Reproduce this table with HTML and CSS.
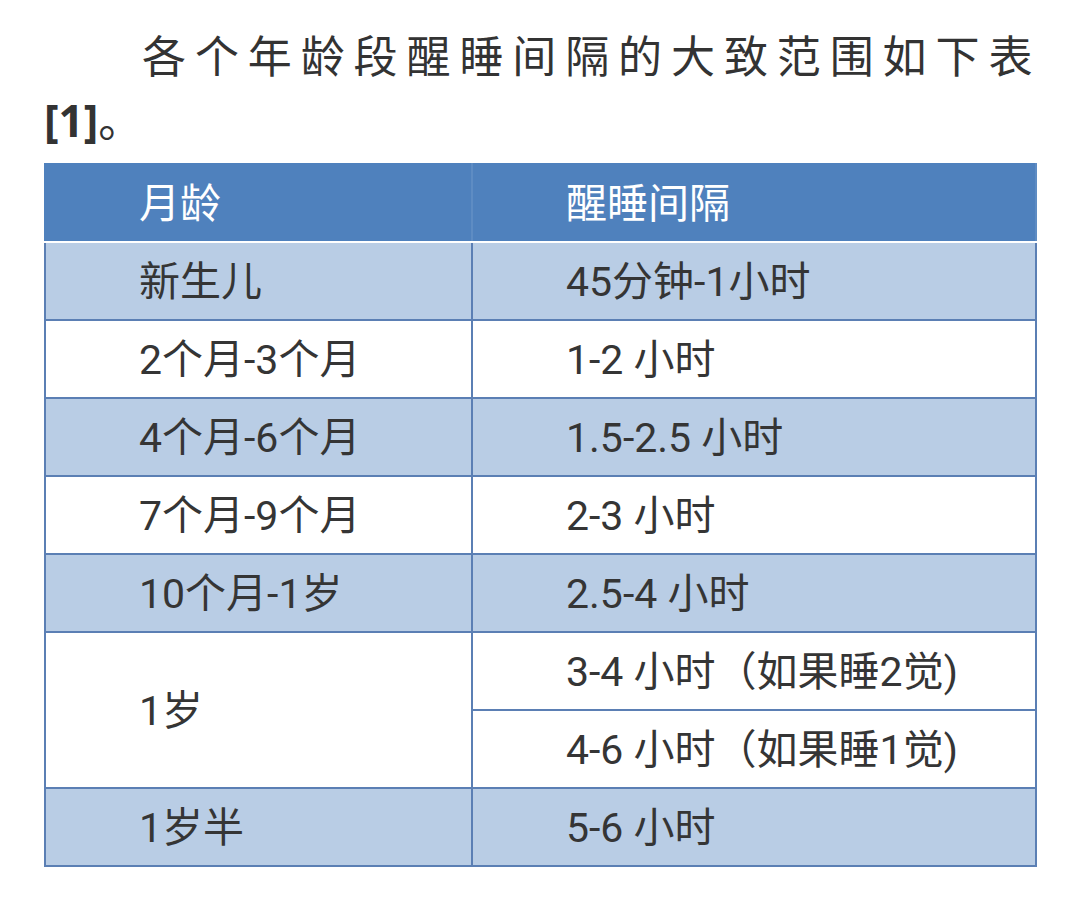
FILE: index.html
```html
<!DOCTYPE html>
<html lang="zh-CN">
<head>
<meta charset="utf-8">
<title>醒睡间隔</title>
<link rel="stylesheet" href="styles.css">
</head>
<body>
<div class="page">
  <p class="intro">各个年龄段醒睡间隔的大致范围如下表<b class="ref">[1]</b>。</p>
  <table class="grid">
    <colgroup><col class="c1"><col class="c2"></colgroup>
    <thead>
      <tr><th>月龄</th><th>醒睡间隔</th></tr>
    </thead>
    <tbody>
      <tr class="shade"><td>新生儿</td><td>45分钟-1小时</td></tr>
      <tr><td>2个月-3个月</td><td>1-2 小时</td></tr>
      <tr class="shade"><td>4个月-6个月</td><td>1.5-2.5 小时</td></tr>
      <tr><td>7个月-9个月</td><td>2-3 小时</td></tr>
      <tr class="shade"><td>10个月-1岁</td><td>2.5-4 小时</td></tr>
      <tr><td rowspan="2">1岁</td><td>3-4 小时（如果睡2觉)</td></tr>
      <tr><td>4-6 小时（如果睡1觉)</td></tr>
      <tr class="shade"><td>1岁半</td><td>5-6 小时</td></tr>
    </tbody>
  </table>
</div>
</body>
</html>
```

FILE: styles.css
```css
html, body {
  margin: 0;
  padding: 0;
  background: #ffffff;
}
.page {
  padding: 22px 45px 0 44px;
}
.intro {
  margin: 0 -24px 11px 0;
  font-family: "Noto Sans CJK SC", sans-serif;
  font-size: 44px;
  line-height: 64px;
  letter-spacing: 8.9px;
  text-indent: 98px;
  color: #333333;
  font-weight: 400;
}
.ref {
  font-family: "Noto Sans", "Noto Sans CJK SC", sans-serif;
  font-weight: 700;
  letter-spacing: 0;
}
.grid {
  width: 991px;
  border-collapse: collapse;
  table-layout: fixed;
  font-family: Roboto, "Noto Sans CJK SC", sans-serif;
  font-size: 41px;
  color: #353535;
}
.c1 { width: 427px; }
.c2 { width: 564px; }
.grid th, .grid td {
  height: 78px;
  padding: 0 0 6px 93px;
  text-align: left;
  vertical-align: middle;
  border: 2px solid #5b7fb4;
  font-weight: 400;
  box-sizing: border-box;
}
.grid th {
  background: #4f81bd;
  color: #ffffff;
  border-color: #4f81bd;
  border-bottom: 2px solid #ffffff;
  border-right-color: #5e8cc3;
}
.grid tr.shade td {
  background: #b9cde5;
}
```
